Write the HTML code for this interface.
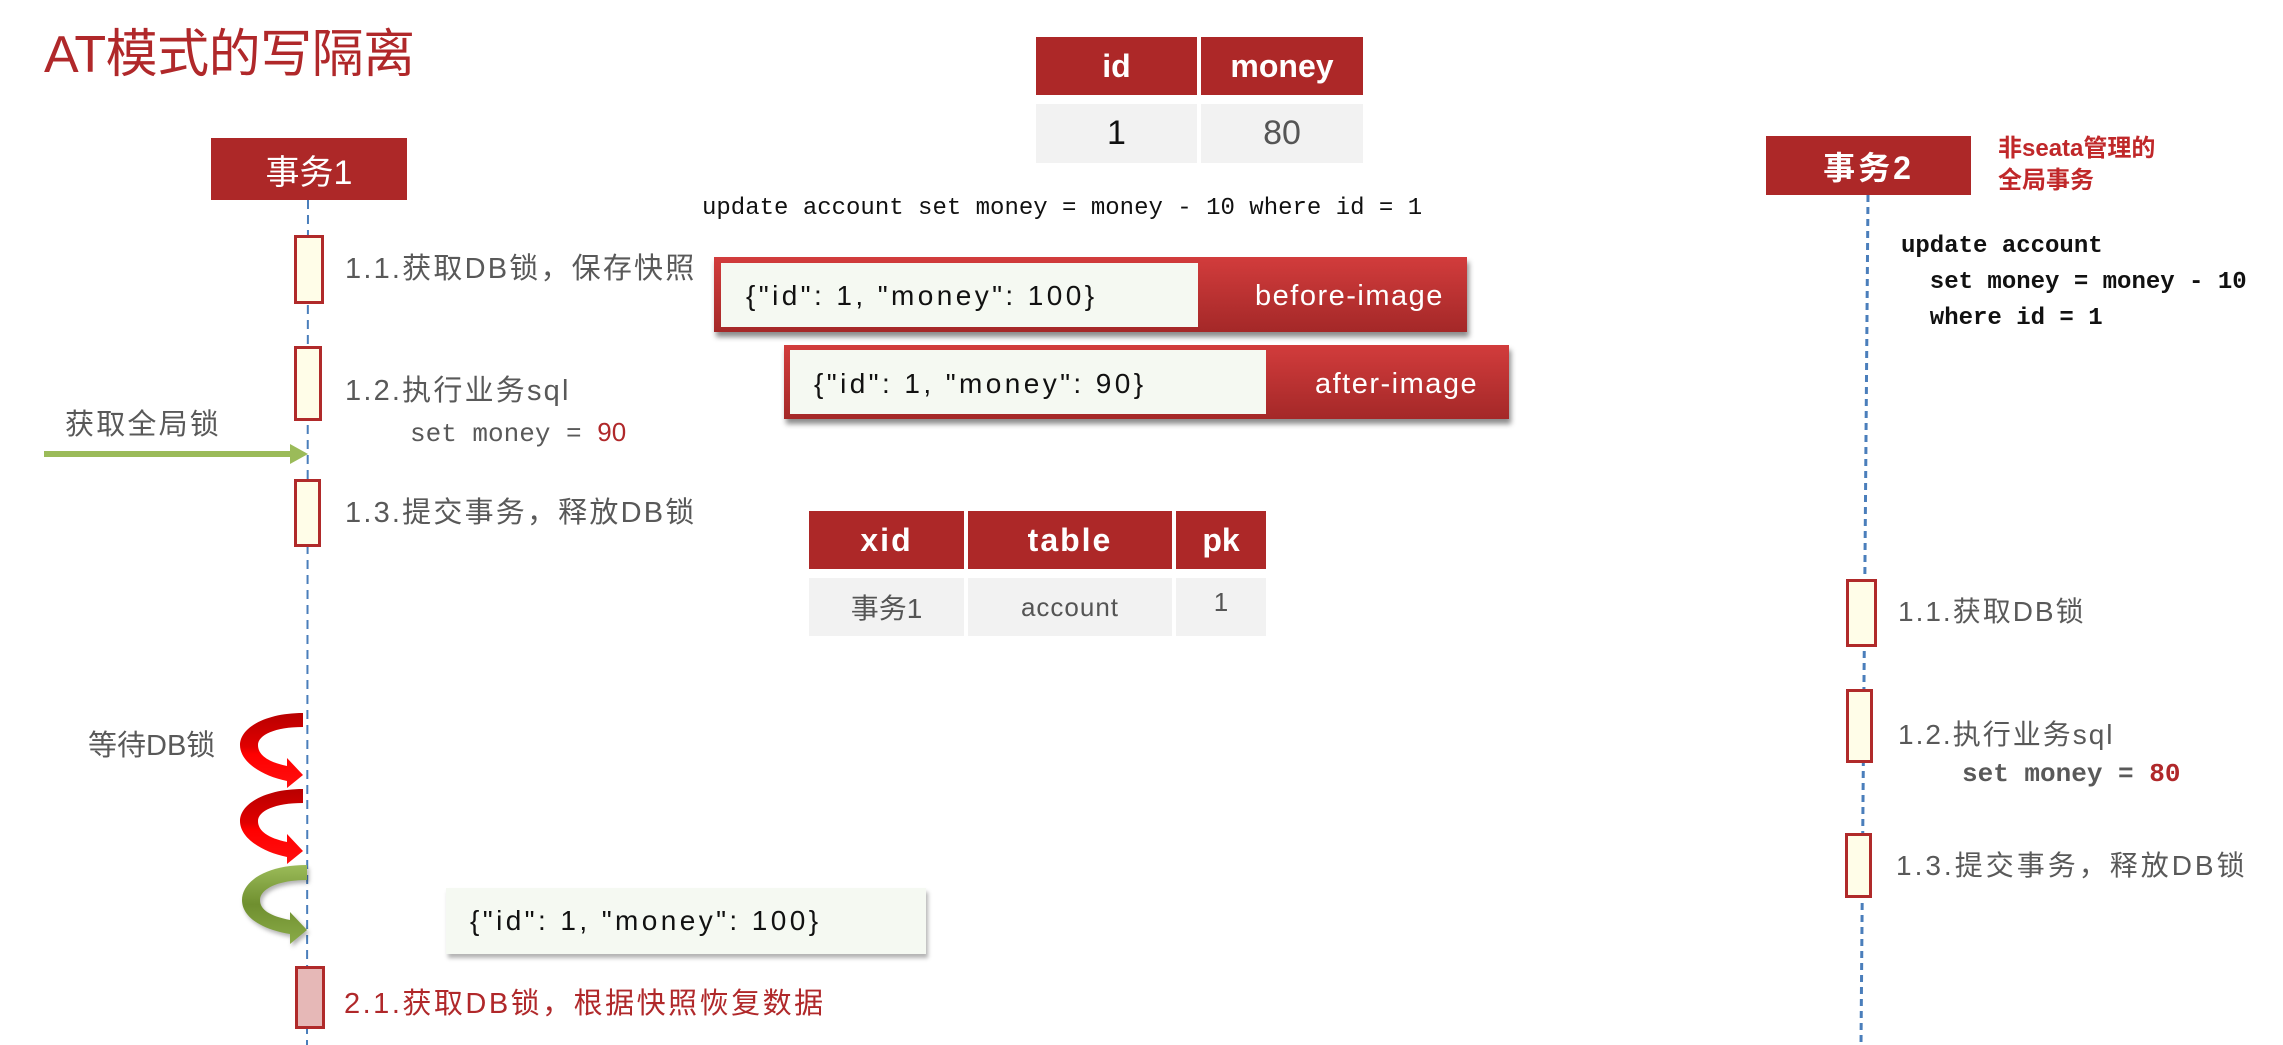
<!DOCTYPE html>
<html><head><meta charset="utf-8"><style>
*{margin:0;padding:0;box-sizing:border-box}
body{width:2283px;height:1045px;background:#fff;position:relative;overflow:hidden;font-family:"Liberation Sans","Noto Sans CJK SC",sans-serif}
.a{position:absolute;white-space:nowrap}
.g{color:#595959}
.ls{letter-spacing:2.2px}
.hdr{background:#ad2828;color:#fff;display:flex;align-items:center;justify-content:center;position:absolute}
.cell{background:#f2f2f2;display:flex;align-items:center;justify-content:center;position:absolute}
.act{position:absolute;background:#fffde8;border:3px solid #b02a2a}
.mono{font-family:"Liberation Mono","Noto Sans CJK SC",monospace}
.img{position:absolute;background:linear-gradient(#d23c3c,#a42828);box-shadow:2px 5px 5px rgba(0,0,0,.45)}
.img .in{position:absolute;background:#f5f9f2}
.js{letter-spacing:3.4px}
</style></head><body>
<div class="a" style="left:44px;top:24px;font-size:52px;color:#b0282a;line-height:62px;letter-spacing:-0.5px">AT模式的写隔离</div>

<svg class="a" style="left:0;top:0" width="2283" height="1045">
<line x1="308" y1="200" x2="307" y2="1045" stroke="#4a7ebb" stroke-width="2" stroke-dasharray="9,6"/>
<line x1="1868" y1="195" x2="1861" y2="1045" stroke="#4a7ebb" stroke-width="3" stroke-dasharray="7,5"/>
<defs>
<linearGradient id="rg" x1="0" y1="0" x2="0" y2="1"><stop offset="0" stop-color="#b80000"/><stop offset="0.45" stop-color="#e00000"/><stop offset="0.55" stop-color="#ff0000"/><stop offset="1" stop-color="#ff1010"/></linearGradient>
<linearGradient id="gg" x1="0" y1="0" x2="0" y2="1"><stop offset="0" stop-color="#9bbb59"/><stop offset="0.5" stop-color="#6f8f2f"/><stop offset="1" stop-color="#8aab48"/></linearGradient>
</defs>
<path d="M303,713 C265,713 240,728 240,745 C240,762 262,776 287,781 L287,788 L303,775 L287,758 L287,766 C268,762 258,755 258,745 C258,735 275,727 303,727 Z" fill="url(#rg)"/>
<path d="M303,789 C265,789 240,804 240,821 C240,838 262,852 287,857 L287,864 L303,851 L287,834 L287,842 C268,838 258,831 258,821 C258,811 275,803 303,803 Z" fill="url(#rg)"/>
<path d="M307,865 C265,865 242,882 242,900 C242,918 264,930 290,934 L290,944 L307,930 L290,912 L290,920 C270,916 260,910 260,900 C260,889 278,880 307,880 Z" fill="url(#gg)" style="filter:drop-shadow(2px 3px 2px rgba(0,0,0,.3))"/>
<line x1="44" y1="454" x2="292" y2="454" stroke="#9bbb59" stroke-width="6"/>
<polygon points="290,444 308,454 290,464" fill="#9bbb59"/>
</svg>

<div class="hdr" style="left:211px;top:138px;width:196px;height:62px;font-size:34px">事务1</div>
<div class="act" style="left:294px;top:235px;width:30px;height:69px"></div>
<div class="act" style="left:294px;top:346px;width:28px;height:75px"></div>
<div class="act" style="left:294px;top:479px;width:27px;height:68px"></div>
<div class="act" style="left:295px;top:966px;width:30px;height:63px;background:#e6b8b7"></div>

<div class="a g ls" style="left:345px;top:251px;font-size:29px;line-height:36px">1.1.获取DB锁，保存快照</div>
<div class="a g ls" style="left:345px;top:373px;font-size:29px;line-height:36px">1.2.执行业务sql</div>
<div class="a g mono" style="left:410px;top:415px;font-size:26px;line-height:34px">set money = <span style="color:#b0282a;font-family:'Liberation Sans'">90</span></div>
<div class="a g ls" style="left:65px;top:407px;font-size:29px;line-height:36px">获取全局锁</div>
<div class="a g ls" style="left:345px;top:495px;font-size:29px;line-height:36px">1.3.提交事务，释放DB锁</div>
<div class="a g" style="left:88px;top:728px;font-size:29px;line-height:36px">等待DB锁</div>
<div class="a ls" style="left:344px;top:986px;font-size:29px;line-height:36px;color:#b0282a;letter-spacing:2.5px">2.1.获取DB锁，根据快照恢复数据</div>

<div style="position:absolute;left:446px;top:888px;width:480px;height:66px;background:#f5f9f2;box-shadow:2px 4px 4px rgba(0,0,0,.3)"></div>
<div class="a js" style="left:470px;top:903px;font-size:28px;line-height:36px;color:#111">{"id": 1, "money": 100}</div>

<div class="hdr" style="left:1036px;top:37px;width:161px;height:58px;font-size:32px;font-weight:bold">id</div>
<div class="hdr" style="left:1201px;top:37px;width:162px;height:58px;font-size:32px;font-weight:bold">money</div>
<div class="cell" style="left:1036px;top:104px;width:161px;height:59px;font-size:34px;color:#111">1</div>
<div class="cell" style="left:1201px;top:104px;width:162px;height:59px;font-size:34px;color:#555">80</div>

<div class="a mono" style="left:702px;top:193px;font-size:24px;line-height:32px;color:#111">update account set money = money - 10 where id = 1</div>

<div class="img" style="left:714px;top:257px;width:753px;height:75px"><div class="in" style="left:7px;top:6px;width:477px;height:64px"></div></div>
<div class="a js" style="left:746px;top:278px;font-size:28px;line-height:36px;color:#111">{"id": 1, "money": 100}</div>
<div class="a" style="left:1255px;top:278px;font-size:29px;line-height:36px;color:#fff;letter-spacing:1.5px">before-image</div>

<div class="img" style="left:784px;top:345px;width:725px;height:74px"><div class="in" style="left:6px;top:5px;width:476px;height:64px"></div></div>
<div class="a js" style="left:814px;top:366px;font-size:28px;line-height:36px;color:#111">{"id": 1, "money": 90}</div>
<div class="a" style="left:1315px;top:366px;font-size:29px;line-height:36px;color:#fff;letter-spacing:1.5px">after-image</div>

<div class="hdr" style="left:809px;top:511px;width:155px;height:58px;font-size:32px;font-weight:bold;letter-spacing:2px">xid</div>
<div class="hdr" style="left:968px;top:511px;width:204px;height:58px;font-size:32px;font-weight:bold;letter-spacing:2px">table</div>
<div class="hdr" style="left:1176px;top:511px;width:90px;height:58px;font-size:32px;font-weight:bold">pk</div>
<div class="cell" style="left:809px;top:578px;width:155px;height:58px;font-size:28px;color:#555">事务1</div>
<div class="cell" style="left:968px;top:578px;width:204px;height:58px;font-size:26px;color:#555;letter-spacing:1px">account</div>
<div class="cell" style="left:1176px;top:578px;width:90px;height:58px;font-size:26px;color:#555;padding-bottom:10px">1</div>

<div class="hdr" style="left:1766px;top:136px;width:205px;height:59px;font-size:32px;font-weight:bold;letter-spacing:3px">事务2</div>
<div class="a" style="left:1998px;top:133px;font-size:24px;line-height:32px;color:#c0282a;font-weight:bold">非seata管理的<br>全局事务</div>
<div class="a mono" style="left:1901px;top:229px;font-size:24px;line-height:36px;color:#111;font-weight:bold">update account<br>&nbsp;&nbsp;set money = money - 10<br>&nbsp;&nbsp;where id = 1</div>

<div class="act" style="left:1846px;top:579px;width:31px;height:68px"></div>
<div class="act" style="left:1846px;top:689px;width:27px;height:74px"></div>
<div class="act" style="left:1845px;top:833px;width:27px;height:65px"></div>
<div class="a g" style="left:1898px;top:594px;font-size:28px;line-height:36px;letter-spacing:2px">1.1.获取DB锁</div>
<div class="a g" style="left:1898px;top:717px;font-size:28px;line-height:36px;letter-spacing:2px">1.2.执行业务sql</div>
<div class="a g mono" style="left:1962px;top:757px;font-size:26px;line-height:34px;font-weight:bold">set money = <span style="color:#b0282a">80</span></div>
<div class="a g" style="left:1896px;top:848px;font-size:28px;line-height:36px;letter-spacing:3px">1.3.提交事务，释放DB锁</div>
</body></html>
